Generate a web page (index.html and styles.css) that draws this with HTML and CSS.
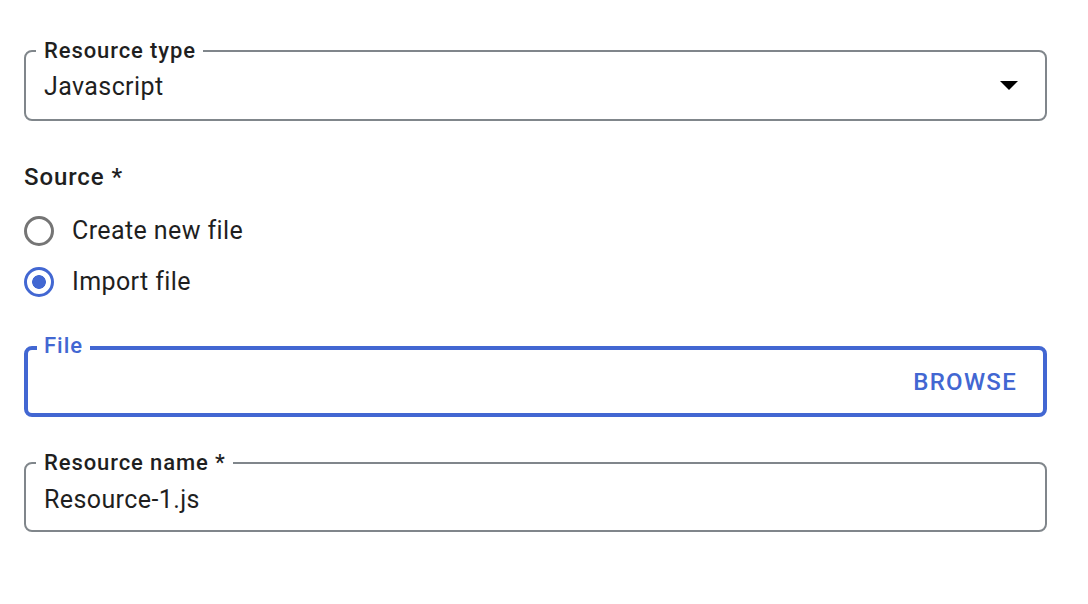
FILE: index.html
```html
<!DOCTYPE html>
<html lang="en">
<head>
<meta charset="utf-8">
<title>Resource</title>
<link rel="stylesheet" href="styles.css">
</head>
<body>
<form class="form">
  <fieldset class="field field-select">
    <legend class="field-label">Resource type</legend>
    <div class="field-row">
      <span class="field-value">Javascript</span>
      <svg class="dropdown-arrow" width="18" height="9" viewBox="0 0 18 9" aria-hidden="true"><polygon points="0,0 18,0 9,9" fill="#000"/></svg>
    </div>
  </fieldset>

  <div class="section-title">Source *</div>
  <div class="radio-group">
    <label class="radio-row"><span class="radio"></span><span class="radio-text">Create new file</span></label>
    <label class="radio-row"><span class="radio radio-checked"></span><span class="radio-text">Import file</span></label>
  </div>

  <fieldset class="field field-file">
    <legend class="field-label file-label">File</legend>
    <div class="field-row file-row">
      <span class="browse">BROWSE</span>
    </div>
  </fieldset>

  <fieldset class="field field-name">
    <legend class="field-label">Resource name *</legend>
    <div class="field-row">
      <span class="field-value">Resource-1.js</span>
    </div>
  </fieldset>
</form>
</body>
</html>
```

FILE: styles.css
```css
* { box-sizing: border-box; }
html, body { margin: 0; padding: 0; background: #fff; }
body {
  font-family: Roboto, "Noto Sans", "Liberation Sans", sans-serif;
  color: #1f1f1f;
}
.form {
  padding: 41px 41px 0 24px;
  display: flex;
  flex-direction: column;
}
.field {
  margin: 0;
  border: 2px solid #80868b;
  border-radius: 8px;
  padding: 12px 18px 18px 18px;
  min-width: 0;
}
.field-label {
  font-size: 22px;
  line-height: 20px;
  font-weight: 500;
  letter-spacing: 0.9px;
  padding: 0 7px 0 8px;
  margin-left: -8px;
  color: #1f1f1f;
}
.field-row {
  display: flex;
  align-items: center;
  height: 28px;
}
.field-value {
  flex: 1;
  font-size: 25px;
  line-height: 28px;
  letter-spacing: 0.4px;
}
.dropdown-arrow {
  margin-right: 9px;
  margin-bottom: 4px;
}
.section-title {
  margin-top: 42px;
  font-size: 24px;
  line-height: 28px;
  font-weight: 500;
  letter-spacing: 0.9px;
}
.radio-group {
  margin-top: 14px;
  display: flex;
  flex-direction: column;
}
.radio-row {
  height: 51px;
  display: flex;
  align-items: center;
  gap: 18px;
}
.radio {
  width: 30px;
  height: 30px;
  border-radius: 50%;
  border: 3px solid #757575;
  flex: none;
}
.radio-checked {
  border-color: #4267d2;
  background: radial-gradient(circle, #4267d2 0 6.5px, transparent 7.2px);
}
.radio-text {
  font-size: 25px;
  line-height: 28px;
  letter-spacing: 0.4px;
}
.field-file {
  margin-top: 28px;
  border: 4px solid #4267d2;
  padding: 7px 27px 17px 16px;
}
.file-label {
  font-size: 22px;
  line-height: 22px;
  letter-spacing: 1px;
  color: #4267d2;
  padding: 0 7px 4px 7px;
  margin-left: -7px;
}
.file-row {
  justify-content: flex-end;
}
.browse {
  font-size: 24px;
  line-height: 28px;
  font-weight: 500;
  color: #4267d2;
  letter-spacing: 1.3px;
  margin-right: -1px;
}
.field-name {
  margin-top: 36px;
  padding: 13px 18px 16px 18px;
}
```
